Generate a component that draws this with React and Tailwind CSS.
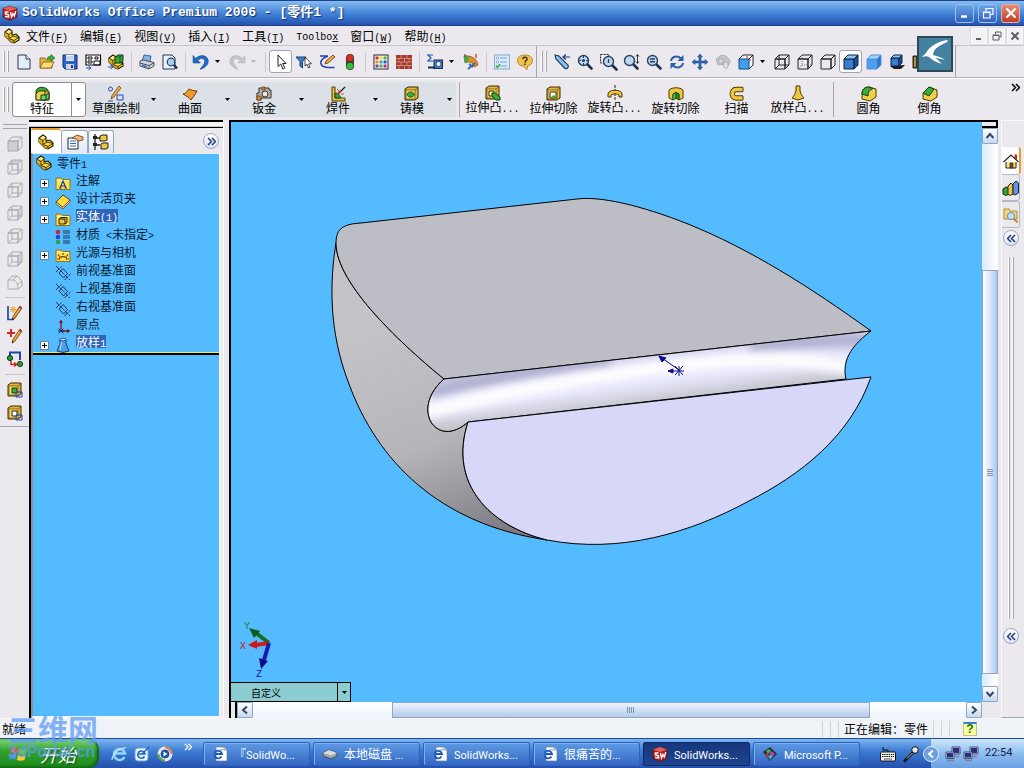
import React from 'react';
import clsx from 'clsx';

/* ---------- icons, all on a 16 x 16 grid ---------- */

const Lens = ({ children }) => (
  <>
    <path d="M10 10 L14.5 14.5" stroke="#1c2f4c" strokeWidth="2.6" strokeLinecap="round" />
    <circle cx="6.5" cy="6.5" r="5" fill="#bcd8f0" stroke="#27415f" strokeWidth="1.4" />
    {children}
  </>
);

const Cube = ({ front = 'none', top = 'none', side = 'none', stroke = '#222', inner }) => (
  <g stroke={stroke} strokeWidth="1" strokeLinejoin="round">
    <path d="M1 5 H11 V15 H1 Z" fill={front} />
    <path d="M1 5 L5 1 H15 L11 5 Z" fill={top} />
    <path d="M11 5 L15 1 V11 L11 15 Z" fill={side} />
    {inner}
  </g>
);

const hidden = <path d="M5 1 V11 H15 M5 11 L1 15" fill="none" />;

const GoldBox = ({ children }) => (
  <>
    <path d="M1 3 L4 1 H14 V12 L11 14 H1 Z" fill="#e3b53a" stroke="#3a2a05" />
    <path d="M2 4 H11 V13 H2 Z" fill="#f7da6a" stroke="#6b4e0c" strokeWidth=".7" />
    <path d="M11 4 L14 1.5" stroke="#6b4e0c" strokeWidth=".7" />
    {children}
  </>
);

const Part = () => (
  <>
    <path d="M1 4 L5 1 L8 3 V7 L12 6 L15 9 V12 L10 15 L7 14 L1 8 Z" fill="#f7d83c" stroke="#201800" strokeWidth="1.1" />
    <path d="M5 10.5 L10 12.5 V15 L7 14 L1 8 V4 L5 6.5 Z" fill="#d9a91e" />
    <path d="M1 4 L5 6.5 V10.5 L10 12.5 V15 M5 6.5 L8 4 M5 10.5 L9 8 L15 9.5 M10 12.5 L15 9.5" fill="none" stroke="#201800" strokeWidth=".8" />
    <path d="M5 2 L7.5 3.5 L5 5.3 L2.2 4 Z" fill="#fff08a" />
  </>
);

const Pencil = () => (
  <>
    <path d="M13 1 L15 3 L8 13 L5 15 L6 11.5 Z" fill="#f2a93a" stroke="#5a3308" strokeWidth=".8" />
    <path d="M13 1 L15 3 L14 4.4 L12 2.6 Z" fill="#c23b2a" />
    <path d="M5 15 L5.5 13 L6.8 14 Z" fill="#111" />
  </>
);

const Folder = ({ children }) => (
  <>
    <path d="M1 3 H6 L7.5 4.5 H15 V14.5 H1 Z" fill="#ffe14a" stroke="#8b7414" />
    <path d="M2 5.5 H14" stroke="#fff6a5" />
    {children}
  </>
);

const Plane = () => (
  <g fill="none" stroke="#1c3560" strokeWidth="1">
    <path d="M4 8 L8 3.500 L12.500 8.500 L8.500 13 Z" />
    <path d="M1 1 L15 15 M1 7 L6.500 1.500 M9.500 15 L15.500 9" strokeDasharray="5 1" />
  </g>
);

const IePage = () => (
  <>
    <path d="M4 1 H12 L15 4 V15 H4 Z" fill="#fff" stroke="#6d7890" strokeWidth=".7" />
    <path d="M12 1 V4 H15" fill="#dbe4f2" stroke="#6d7890" strokeWidth=".7" />
    <path d="M9.500 10.500 A3.800 3.800 0 1 1 10 8 H3" fill="none" stroke="#1d56c0" strokeWidth="1.800" />
    <path d="M1 12 C2 7 7 3 11 4" fill="none" stroke="#3f86dc" strokeWidth=".9" />
  </>
);

const SwLogo = () => (
  <>
    <path d="M1 3.500 L8 1 L15 3.500 V12 L8 15.500 L1 12 Z" fill="#b51f1c" stroke="#5f0d0b" strokeWidth=".7" />
    <path d="M1 3.500 L8 1 L15 3.500 L8 6 Z" fill="#e0605a" />
    <path d="M6.500 7 H3.500 V9 L6.500 9.800 V12 L3 11.500" fill="none" stroke="#fff" strokeWidth="1.500" />
    <path d="M8.500 7 L9.500 12 L11 8.500 L12.300 11 L13.800 6" fill="none" stroke="#fff" strokeWidth="1.300" />
  </>
);

const Monitors = () => (
  <>
    <path d="M7 1 H15 V8 H7 Z" fill="#c9cde0" stroke="#4a4f74" />
    <path d="M8 2 H14 V7 H8 Z" fill="#26307e" />
    <path d="M1 6 H9 V12.500 H1 Z" fill="#c9cde0" stroke="#4a4f74" />
    <path d="M2 7 H8 V11.500 H2 Z" fill="#26307e" />
    <path d="M2 14.500 H9 M10 10.500 H14" stroke="#7d82a0" strokeWidth="1.500" />
  </>
);

const icons = {
  logo: <SwLogo />,
  part: <Part />,
  newDoc: (
    <>
      <path d="M2 1 H10 L14 5 V15 H2 Z" fill="#e3effa" stroke="#26354d" />
      <path d="M10 1 V5 H14" fill="#fff" stroke="#26354d" />
    </>
  ),
  open: (
    <>
      <path d="M1 4 H6 L7 6 H13 V14 H1 Z" fill="#e8b43c" stroke="#7a5510" strokeWidth=".8" />
      <path d="M1 14 L4 8 H15 L12 14 Z" fill="#ffdf73" stroke="#7a5510" strokeWidth=".8" />
      <path d="M8 5 C9 2 11 2 12 2.500 V.5 L16 4 L12 7 V5 C10 5 9 5 8 5 Z" fill="#35b135" stroke="#146014" strokeWidth=".6" />
    </>
  ),
  save: (
    <>
      <path d="M1 1 H15 V15 H3 L1 13 Z" fill="#2d62c8" stroke="#12306e" />
      <path d="M4 1 H12 V7 H4 Z" fill="#eef4fb" />
      <path d="M4 3 H12 M4 5 H12" stroke="#87a9dd" strokeWidth=".8" />
      <path d="M4 10 H12 V15 H4 Z" fill="#cfd6e2" />
      <path d="M9 11 H11 V14 H9 Z" fill="#1b3e8a" />
    </>
  ),
  drawing: (
    <>
      <path d="M1 1 H15.500 V11 H1 Z" fill="#fff" stroke="#111" strokeWidth="1.200" />
      <path d="M3 3 H7 V5 H3 Z M10 3 H13 V5 H10 Z M3 7 H7 V9 H3 Z M9 7 H15 V11 H9 Z" fill="none" stroke="#111" />
      <path d="M1 14 H5 M3.500 12 L6 14 L3.500 16" fill="none" stroke="#1f4fc0" />
    </>
  ),
  assembly: (
    <>
      <Part />
      <path d="M7 3 L10 1 H15 V7 L12 9 H7 Z" fill="#39a83c" stroke="#0c3c10" />
      <path d="M7 3 H12 V9 M12 3 L15 1" fill="none" stroke="#0c3c10" strokeWidth=".7" />
      <path d="M0 13 H4 M2.500 11 L5 13 L2.500 15" fill="none" stroke="#1f4fc0" />
    </>
  ),
  print: (
    <>
      <path d="M5 1 L12 2 L11 8 L3 7 Z" fill="#7db2ea" stroke="#2c4f7d" strokeWidth=".8" />
      <path d="M1 7 L4 6 L15 8.500 V12 L10 15 L1 12 Z" fill="#d3d7dd" stroke="#4a515c" />
      <path d="M1 9 L10 11.500 L15 9 M10 11.500 V15" fill="none" stroke="#4a515c" />
      <path d="M3 11 L8 13" stroke="#2f6fc0" strokeWidth="1.500" />
    </>
  ),
  preview: (
    <>
      <path d="M1 1 H10 L13 4 V15 H1 Z" fill="#eaf2fb" stroke="#26354d" />
      <circle cx="9" cy="8" r="3.800" fill="#a8d0ee" stroke="#234468" strokeWidth="1.200" />
      <path d="M12 11 L15 14.500" stroke="#1c2f4c" strokeWidth="2.400" />
    </>
  ),
  undo: <path d="M0 1.500 V9 H7.500 L5 6.500 C8.500 3 12.500 4.500 11.500 8.500 C10.800 11 9 12 7 15.500 C13 13.500 16.500 9.500 15 5.500 C13.500 1 7 0 2.800 4.400 Z" fill="#1f69c4" stroke="#12468f" strokeWidth=".5" />,
  redo: <path d="M16 1.500 V9 H8.500 L11 6.500 C7.500 3 3.500 4.500 4.500 8.500 C5.200 11 7 12 9 15.500 C3 13.500 -.5 9.500 1 5.500 C2.500 1 9 0 13.200 4.400 Z" fill="#c4c3c8" stroke="#b3b2b8" strokeWidth=".5" />,
  pointer: <path d="M5 1 V12.500 L7.800 10 L9.800 15 L11.800 14 L9.800 9.500 H13 Z" fill="#fff" stroke="#222" />,
  filter: (
    <>
      <path d="M0 3 H10 L6.500 7.500 V14 L4 12 V7.500 Z" fill="#3a80c8" stroke="#143d6e" />
      <path d="M9 3 V12 L11 10.200 L12.500 14 L14 13.300 L12.600 9.800 H15.500 Z" fill="#fff" stroke="#222" strokeWidth=".8" />
    </>
  ),
  sketch: (
    <>
      <path d="M1 2 H9 C3 4 0 8 3 11.500 C5 14 9 13.500 15.500 13.500" fill="none" stroke="#2340b4" strokeWidth="1.500" />
      <path d="M14 1 L16 3 L9 9 L6 10 L7 7 Z" fill="#f2a93a" stroke="#5a3308" strokeWidth=".8" />
    </>
  ),
  traffic: (
    <>
      <rect x="4" y="0" width="8" height="16" rx="4" fill="#3c3c34" />
      <circle cx="8" cy="4" r="3.200" fill="#e02a20" />
      <circle cx="8" cy="12" r="3.200" fill="#2fbf3a" />
    </>
  ),
  palette: (
    <>
      <rect x="1" y="1" width="14" height="14" fill="#fff" stroke="#222" />
      {['#d7322c', '#e9d735', '#43b648', '#f08a2a', '#3ca6a0', '#2b51c9', '#7a36b8', '#4fae36', '#b02e7a'].map((fill, i) => (
        <rect key={fill} x={2.5 + (i % 3) * 4} y={2.5 + Math.floor(i / 3) * 4} width="3" height="3" fill={fill} />
      ))}
    </>
  ),
  brick: (
    <>
      <rect x="0" y="1" width="16" height="14" fill="#a83a2c" />
      <path d="M0 4.500 H16 M0 8 H16 M0 11.500 H16 M5 1 V4.500 M11 1 V4.500 M3 4.500 V8 M8.500 4.500 V8 M13 4.500 V8 M5 8 V11.500 M11 8 V11.500 M3 11.500 V15 M8.500 11.500 V15 M13 11.500 V15" stroke="#d9a894" strokeWidth=".7" />
    </>
  ),
  measure: (
    <>
      <path d="M6 1 H1 L4 4 L1 7 H6" fill="none" stroke="#1f4fa8" strokeWidth="1.200" />
      <rect x="7" y="6" width="8.500" height="8.500" fill="#3f7fd0" stroke="#1c2b44" />
      <circle cx="11.500" cy="10" r="2.600" fill="#eaf0f7" stroke="#1c2b44" strokeWidth=".8" />
      <path d="M1 13.500 H8" stroke="#1c2b44" strokeWidth="2" />
    </>
  ),
  deviation: (
    <>
      <path d="M1 2 C7 1 14 4 15 11 L11 13 C10 8 6 7 2 9 Z" fill="#e98a23" stroke="#5d3a0a" strokeWidth=".6" />
      <path d="M1 2 C4 1.600 5 2 6.500 2.600 L5 7.600 L2 9 Z" fill="#3bb04a" />
      <path d="M13 4 V0 M2 0 V3" stroke="#c22" strokeWidth="1.200" />
      <path d="M6 10 L10 13 M5 15 L12 9" stroke="#2a67b5" strokeWidth="1.800" />
    </>
  ),
  options: (
    <>
      <rect x="0.500" y="1" width="15" height="14" fill="#d8ecfb" stroke="#86acd2" />
      <path d="M6 4 H13 M6 8 H13 M6 12 H13" stroke="#7aa0c8" strokeWidth="1.200" />
      <path d="M2.500 3 H4.500 V5 H2.500 Z M2.500 7 H4.500 V9 H2.500 Z" fill="#fff" stroke="#7aa0c8" strokeWidth=".7" />
      <path d="M2 11.500 L3.500 13.500 L6 10" fill="none" stroke="#3aa544" strokeWidth="1.400" />
    </>
  ),
  help: (
    <>
      <path d="M8 1 C12.500 1 15.500 3 15.500 6.500 C15.500 10 12.500 11.500 10.500 12 L10 15.500 L6.500 12.200 C3 12 .5 10 .5 6.500 C.5 3 3.500 1 8 1 Z" fill="#f3c24c" stroke="#a37414" strokeWidth=".8" />
      <path d="M5.800 5.200 C5.800 2.400 10.300 2.600 10 5.200 C9.800 6.600 8 6.600 8 8.500 M8 9.500 V11" fill="none" stroke="#29241a" strokeWidth="1.400" />
    </>
  ),
  lastView: (
    <>
      <path d="M1 1 L5 2 L14 11 C15.500 13 12.500 16 10.500 14 L2 5 Z" fill="#8fc0ea" stroke="#1b3b63" strokeWidth="1.100" />
      <path d="M16 3 H9 M12 .5 L9 3 L12 5.500" fill="none" stroke="#1b3b8a" strokeWidth="1.200" />
    </>
  ),
  zoomFit: <Lens><circle cx="6.500" cy="6.500" r="1.600" fill="#27415f" /><path d="M6.500 2 V4 M6.500 9 V11 M2 6.500 H4 M9 6.500 H11" stroke="#27415f" /></Lens>,
  zoomArea: (
    <>
      <path d="M.5 .5 H9 V9 H.5 Z" fill="none" stroke="#222" strokeDasharray="2 1" />
      <g transform="translate(2 1)"><Lens><path d="M6.500 4 V8" stroke="#27415f" strokeWidth="1.300" /></Lens></g>
    </>
  ),
  zoomInOut: <Lens><path d="M14.500 1 V9 M13 2.500 L14.500 .5 L16 2.500 M13 7.500 L14.500 9.500 L16 7.500" fill="none" stroke="#222" strokeWidth=".9" /></Lens>,
  zoomSel: <Lens><path d="M4 5 H9 M4 7.800 H9" stroke="#27415f" strokeWidth="1.500" /></Lens>,
  rotate: (
    <g fill="none" stroke="#2a5fa8" strokeWidth="2">
      <path d="M2 7 C2.500 3 8 0.500 12 4.500 M14 9 C13.500 13 8 15.500 4 11.500" />
      <path d="M14.500 1 V7 H8.500 Z M1.500 15 V9 H7.500 Z" fill="#2a5fa8" stroke="none" />
    </g>
  ),
  pan: <path d="M8 0 L10.500 3 H9 V7 H13 V5.500 L16 8 L13 10.500 V9 H9 V13 H10.500 L8 16 L5.500 13 H7 V9 H3 V10.500 L0 8 L3 5.500 V7 H7 V3 H5.500 Z" fill="#2f68b5" stroke="#163a70" strokeWidth=".5" />,
  ghost: (
    <g fill="#c5c4ca" stroke="#a9a8af" strokeWidth=".8">
      <path d="M1 5 L6 1 L11 2 L15 6 L14 11 L9 10 L3 11 Z" />
      <path d="M4 5 H8 V9 H4 Z M9 8 H13 V13 L11 15 L8 12 Z" fill="#dddce1" />
    </g>
  ),
  stdViews: (
    <>
      <path d="M5 1 H15 V11 L11 15" fill="#fff" stroke="#222" />
      <path d="M1 5 H11 V15 H1 Z" fill="#3fa0ee" stroke="#154a86" />
      <path d="M1 5 L5 1 M11 5 L15 1" stroke="#222" />
      <path d="M9 2 V5 M13 6 H11" stroke="#c22" />
    </>
  ),
  wireframe: <Cube inner={hidden} />,
  hiddenGray: <Cube inner={<g strokeDasharray="1 1" stroke="#777">{hidden}</g>} />,
  hiddenNone: <Cube />,
  shadedEdges: <Cube front="#3a7ccf" top="#8fc2f2" side="#1d4f9c" stroke="#0d2344" />,
  shaded: <Cube front="#4f9ff0" top="#a2d0fa" side="#2f74c9" stroke="#4f93dd" />,
  shadow: (
    <>
      <path d="M1 12 L5 15 H12 L16 11 Z" fill="#1a1a1a" />
      <path d="M2 4 H10 V12 H2 Z" fill="#3a7ccf" stroke="#0d2344" />
      <path d="M2 4 L5 1 H13 L10 4 Z" fill="#8fc2f2" stroke="#0d2344" />
      <path d="M10 4 L13 1 V9 L10 12 Z" fill="#1d4f9c" stroke="#0d2344" />
    </>
  ),
  section: (
    <>
      <path d="M1 2 H5 V14 H1 Z" fill="#3a3420" stroke="#222" />
      <path d="M3 3 V13" stroke="#d8b43a" strokeWidth="1.500" />
      <path d="M7 2 H15 V14 H7 Z" fill="#2a68b5" stroke="#111" />
    </>
  ),
  features: (
    <>
      <path d="M2 6 C2 1 9 0 13 3 L15 6 V14 H2 Z" fill="#35a83a" stroke="#103f12" />
      <path d="M2 8 L5 5 H11 V14 H2 Z" fill="#f1cf4a" stroke="#4d3a08" />
      <path d="M11 5 L15 6 V14 H11 Z" fill="#e0b534" stroke="#4d3a08" strokeWidth=".7" />
      <path d="M7 9 H12 V14 H7 Z M12 9 L15 7 V12 L12 14" fill="#6ad36f" stroke="#103f12" />
    </>
  ),
  sketchTab: (
    <>
      <circle cx="2.500" cy="3" r="2" fill="none" stroke="#2a44c4" />
      <path d="M9 9 H15 V14 H9 Z" fill="none" stroke="#2a44c4" />
      <path d="M11 0 L13 2 L6 11 L3 13 L4 9.500 Z" fill="#f2a93a" stroke="#5a3308" strokeWidth=".7" />
      <path d="M0 15 H5" stroke="#2a44c4" />
    </>
  ),
  surface: <path d="M1 8 C4 8 5 5 7 3 C9 4 12 5 15 5 C13 9 11 11 9 14 C7 11 4 10 1 8 Z" fill="#f09a2c" stroke="#6d3d06" />,
  sheetMetal: (
    <>
      <path d="M3 2 H13 V4 H15 V12 H5 V14 H1 V7 H3 Z" fill="#b8b3aa" stroke="#333" />
      <circle cx="9" cy="8" r="3" fill="#e8e5e0" stroke="#333" />
      <path d="M1 10 H5 V14 H1 Z M6 1 H9 V4 H6 Z" fill="#d98c28" stroke="#5e3806" strokeWidth=".7" />
    </>
  ),
  weld: (
    <>
      <path d="M2 1 H5 V12 H15 V15 H2 Z" fill="#eebf3a" stroke="#4d3a08" />
      <path d="M5 12 V7 C8 7 10 9 11 12 Z" fill="#2fa236" stroke="#103f12" strokeWidth=".7" />
      <path d="M8 8 L15 1" stroke="#222" strokeWidth="1.300" />
      <path d="M9 4 V7 H6 M11 8 H14 M10 6 L7 3" stroke="#e04a1c" />
    </>
  ),
  mold: <GoldBox><path d="M3 8.500 C4 5 9 5 10.500 8.500 C9 12 4 12 3 8.500 Z" fill="#37a93c" stroke="#103f12" strokeWidth=".8" /></GoldBox>,
  extrude: <GoldBox><path d="M4 6 H9 V11 H4 Z" fill="#fff2ab" stroke="#3a2a05" /><path d="M7 8 L10 8 L15 12 V15 H11 L7 11 Z" fill="#36ad3c" stroke="#103f12" /></GoldBox>,
  extrudeCut: <GoldBox><path d="M4 6 H10 V12 H4 Z" fill="#fff" stroke="#3a2a05" /><path d="M4.500 11.500 L6.500 9.500 H9.500 V11.500 Z" fill="#36ad3c" /></GoldBox>,
  revolve: (
    <>
      <path d="M8 0 V15" stroke="#222" strokeDasharray="3 1" />
      <path d="M1 9 C1 4 15 4 15 9 V12 H12 V10 C10 8.500 6 8.500 4 10 V12 H1 Z" fill="#f0c63c" stroke="#4d3a08" />
    </>
  ),
  revolveCut: (
    <>
      <path d="M1 4 C4 1 12 1 15 4 V12 L11 14 V8 L8 6.500 L5 8 V14 L1 12 Z" fill="#f0c63c" stroke="#4d3a08" />
      <path d="M5 8 L8 6.500 V12.500 L5 14 Z" fill="#4fc455" stroke="#103f12" strokeWidth=".7" />
      <path d="M11 8 L8 6.500 V12.500 L11 14 Z" fill="#258a2b" stroke="#103f12" strokeWidth=".7" />
    </>
  ),
  sweep: (
    <>
      <path d="M14 3.500 H7 C2 3.500 2 12 7 12 H14" fill="none" stroke="#4d3a08" strokeWidth="5.400" />
      <path d="M14 3.500 H7 C2 3.500 2 12 7 12 H14" fill="none" stroke="#f0c63c" strokeWidth="3.600" />
      <path d="M14 1.500 V5.500 M14 10 V14" stroke="#4d3a08" />
    </>
  ),
  loft: <path d="M6 1 H10 V6 C11 9 12 11 14 13 L8 15 L2 13 C4 11 5 9 6 6 Z" fill="#f0c63c" stroke="#4d3a08" />,
  loftBlue: (
    <>
      <path d="M5 2 H11 V7 L14 14 L8 15.500 L2 14 L5 7 Z" fill="#4b9fe8" stroke="#123f7a" />
      <ellipse cx="8" cy="2.500" rx="3" ry="1.200" fill="#bfe0fb" stroke="#123f7a" strokeWidth=".7" />
      <path d="M6.500 5 L5 13" stroke="#b5dbfa" strokeWidth="1.200" />
    </>
  ),
  fillet: (
    <>
      <path d="M1 8 C1 3 4 1 8 1 L15 3 V11 L9 15 L1 13 Z" fill="#f1cf4a" stroke="#4d3a08" />
      <path d="M1 8 C1 3 4 1 8 1 L12 2.500 C9 4 7 5 7 10 Z" fill="#36ad3c" stroke="#103f12" />
    </>
  ),
  chamfer: (
    <>
      <path d="M1 7 L7 1 L15 4 V11 L9 15 L1 13 Z" fill="#f1cf4a" stroke="#4d3a08" />
      <path d="M1 7 L7 1 L12 3 L7 10 Z" fill="#36ad3c" stroke="#103f12" />
    </>
  ),
  propTab: (
    <>
      <path d="M1 4 H11 V15 H1 Z" fill="#fff" stroke="#222" />
      <path d="M3 7 H9 M3 9.500 H9 M3 12 H9" stroke="#2b65c0" />
      <path d="M5 4 L10 1 L16 3 V6 L11 7 L9 5 Z" fill="#efb277" stroke="#6a3a10" strokeWidth=".8" />
    </>
  ),
  configTab: (
    <>
      <path d="M2 0 V16 M2 4 H7 M2 11 H7" stroke="#222" strokeWidth="1.300" />
      <path d="M0 2 H4 V5 H0 Z M0 9 H4 V12 H0 Z" fill="#222" />
      <path d="M7 2 L9 1 H14 V6 L12 7 H7 Z M8 10 L10 9 H15 V14 L13 15 H8 Z" fill="#f0c63c" stroke="#222" />
    </>
  ),
  annotation: <Folder><path d="M5 13 L8 6 L11 13 M6 11 H10 M4 13 H6.500 M9.500 13 H12" fill="none" stroke="#1d3c9c" strokeWidth="1.200" /></Folder>,
  binder: (
    <>
      <path d="M1 9 L8 2 L15 7 L8 14.500 Z" fill="#ffdb3e" stroke="#5a4508" />
      <path d="M1 9 V11 L8 16 L15 9 V7 L8 14.500 Z" fill="#fff" stroke="#5a4508" strokeWidth=".8" />
    </>
  ),
  solids: <Folder><path d="M4 8 H10 V13 H4 Z M4 8 L6 6.500 H12 V11.500 L10 13" fill="#f3c52f" stroke="#222" /></Folder>,
  lights: <Folder><path d="M4 13 C4 8.500 12 8.500 12 13 M8 8 V6 M4.500 9.500 L3 7.500 M11.500 9.500 L13 7.500 M3 12 H2 M13 12 H14" fill="none" stroke="#7a3a10" strokeWidth="1.200" /></Folder>,
  material: (
    <>
      <circle cx="3" cy="3" r="2.300" fill="#cf2a2a" />
      <circle cx="3" cy="8" r="2.300" fill="#2446c8" />
      <circle cx="3" cy="13" r="2.300" fill="#2ca046" />
      <path d="M8 2 H15 M8 4 H15 M8 7 H15 M8 9 H15 M8 12 H15 M8 14 H15" stroke="#1c3560" strokeWidth="1" />
    </>
  ),
  plane: <Plane />,
  origin: (
    <>
      <path d="M6 12 V2 M6 12 H14" stroke="#7a1220" strokeWidth="1.300" />
      <path d="M4 4 L6 .5 L8 4 Z M12 10 L15.500 12 L12 14 Z" fill="#7a1220" />
      <path d="M3.500 9.500 L8.500 14.500 M8.500 9.500 L3.500 14.500 M3 12 H9" stroke="#1c2f60" />
    </>
  ),
  cubeA: <Cube stroke="#acabb1" front="#cfced4" />,
  cubeB: <Cube stroke="#acabb1" top="#cfced4" inner={hidden} />,
  cubeC: <Cube stroke="#acabb1" inner={hidden} />,
  cubeD: <Cube stroke="#acabb1" side="#cfced4" inner={hidden} />,
  cubeRound: <path d="M1 6 L5 2 H10 L15 7 V12 L11 15 H1 Z M1 6 H6 C9 7 11 9 11 15 M6 6 L10 2 M11 10 L15 7" fill="none" stroke="#acabb1" />,
  newSketch: (
    <>
      <path d="M1 1 V14.500 H6 L9 11" fill="none" stroke="#1f46b4" strokeWidth="1.700" />
      <path d="M6 1 V8 M3 4.500 H9.500 M3.500 2 L8.500 7 M8.500 2 L3.500 7" stroke="#e7a020" />
      <Pencil />
    </>
  ),
  addSketch: (
    <>
      <path d="M4 1 V9 M0 5 H8" stroke="#d42a20" strokeWidth="2" />
      <Pencil />
    </>
  ),
  relations: (
    <>
      <path d="M3 6 V1.500 H13 V9" fill="none" stroke="#1f46b4" strokeWidth="2" />
      <circle cx="3" cy="7" r="2.600" fill="#2a9c34" stroke="#0f3b12" />
      <circle cx="13" cy="13" r="2.600" fill="#2a9c34" stroke="#0f3b12" />
      <path d="M4 10 V13.500 H9 M7 11.500 L9.500 13.500 L7 15.500" fill="none" stroke="#c22" strokeWidth="1.500" />
    </>
  ),
  bossSmall: <GoldBox><path d="M5 6 H10 V11 H5 Z" fill="#36ad3c" stroke="#103f12" /><path d="M9 10 H15 V15 H9 Z" fill="none" stroke="#2340b4" /></GoldBox>,
  cutSmall: <GoldBox><path d="M5 6 H10 V11 H5 Z" fill="#fff" stroke="#222" /><path d="M9 10 H15 V15 H9 Z" fill="none" stroke="#2340b4" /></GoldBox>,
  home: (
    <>
      <path d="M3 8 H13 V15 H3 Z" fill="#ffe77c" stroke="#222" />
      <path d="M11.500 1.500 H14 V7 L11.500 5 Z" fill="#c4291f" />
      <path d="M0.500 9 L8 2 L15.500 9" fill="#fff" stroke="#222" strokeWidth="1.200" />
      <path d="M7 10 H10 V15 H7 Z" fill="#8c4a18" stroke="#222" strokeWidth=".7" />
    </>
  ),
  library: (
    <>
      <path d="M0 9 L3 7 L6 8 V14 L3 15.500 L0 14 Z" fill="#37a43d" stroke="#0e2a10" />
      <path d="M5 6 L8 3 L10 5 V14 L7 15.500 L5 14 Z" fill="#e8c54a" stroke="#3a2a05" />
      <path d="M10 4 L13 1 L15.500 3 V13 L12 15 L10 14 Z" fill="#6a92dc" stroke="#14264d" />
    </>
  ),
  search: (
    <>
      <path d="M1 2 H6 L7 4 H14 V12 H1 Z" fill="#f5d77c" stroke="#b48a2c" />
      <circle cx="8" cy="9" r="3.600" fill="#b9e0f7" stroke="#5b8fb8" />
      <path d="M10.500 11.500 L14.500 15.500" stroke="#c08a2c" strokeWidth="2" />
    </>
  ),
  ie: (
    <>
      <path d="M13.500 11 A5.500 5.500 0 1 1 14 7.500 H4" fill="none" stroke="#8fd3ff" strokeWidth="2.600" />
      <path d="M1 14 C1 8 9 1 15 2" fill="none" stroke="#d5efff" strokeWidth="1.200" />
    </>
  ),
  mail: (
    <>
      <rect x="1" y="2" width="13" height="13" rx="3" fill="#e9f4ff" stroke="#6aa5e0" />
      <path d="M10.500 10.500 A3.600 3.600 0 1 1 11 8 H5" fill="none" stroke="#2165c0" strokeWidth="1.600" />
      <path d="M8 8 L15 1" stroke="#2165c0" strokeWidth="1.500" />
    </>
  ),
  player: (
    <>
      <circle cx="8" cy="8" r="7.500" fill="#e8e4e0" />
      <path d="M8 .5 A7.500 7.500 0 0 1 15.500 8 H8 Z" fill="#e67d2c" />
      <path d="M.5 8 A7.500 7.500 0 0 0 8 15.500 V8 Z" fill="#58a845" />
      <circle cx="8" cy="8" r="5" fill="#1c4ea8" stroke="#fff" />
      <path d="M6.500 5.500 L10.500 8 L6.500 10.500 Z" fill="#fff" />
    </>
  ),
  iePage: <IePage />,
  disk: (
    <>
      <path d="M1 7 L7 4 L15 7 V10 L9 13 L1 10 Z" fill="#9da3ac" stroke="#474c55" />
      <path d="M1 7 L7 4 L15 7 L9 9.500 Z" fill="#d9dde3" />
      <circle cx="11" cy="10.500" r=".8" fill="#4fe04f" />
    </>
  ),
  paint: (
    <>
      <path d="M1 6 L8 1 L15 8 L8 15 Z" fill="#2a2a35" />
      <path d="M4 5 L7 3 L9 5 L6 8 Z" fill="#35c145" />
      <path d="M9 5 L13 8 L11 10 L8 7 Z" fill="#d43adb" />
      <path d="M3 7 L6 8 L8 12 L6 12 Z" fill="#e33a2c" />
      <path d="M8 8 L11 10 L8 14 L7 11 Z" fill="#38b9e8" />
    </>
  ),
  keyboard: (
    <>
      <path d="M8 6 V4 H3 V1" fill="none" stroke="#111" />
      <rect x="0.500" y="6" width="15" height="9" rx="1" fill="#f4f4f4" stroke="#111" />
      <path d="M2 8.500 H14 M2 10.500 H14 M4 13 H12" stroke="#111" strokeDasharray="1.500 .7" />
    </>
  ),
  mic: (
    <>
      <circle cx="12" cy="4" r="3.300" fill="#e9e9e9" stroke="#111" />
      <path d="M10 6.500 L3 13.500 M3 13.500 L1 15.500" stroke="#111" strokeWidth="2.600" />
      <path d="M9.500 7 L4 12.500" stroke="#cfcfcf" strokeWidth="1" />
    </>
  ),
  monitors: <Monitors />,
  flag: (
    <>
      <path d="M1 3 C3 1.500 5 1.800 7.300 3 L6.300 7.500 C4 6.500 2.500 6.500 0 7.500 Z" fill="#ea5a2a" />
      <path d="M8.300 3.400 C10.500 4.400 13 4.300 15.500 3 L14.500 7.500 C12 8.700 9.500 8.700 7.300 7.900 Z" fill="#6cc03c" />
      <path d="M0 8.700 C2.500 7.600 4 7.800 6 8.700 L5 13 C3 12 1 12 -1 13 Z" fill="#4a8fe8" />
      <path d="M7 9 C9.500 10 12 9.800 14.200 8.700 L13 13.200 C11 14.300 8.500 14.400 6 13.400 Z" fill="#f4c92e" />
    </>
  ),
};

const Icon = ({ name, className = 'size-4' }) => (
  <svg viewBox="0 0 16 16" className={clsx('shrink-0 overflow-visible', className)} fill="none" aria-hidden="true">
    {icons[name]}
  </svg>
);

const Caret = ({ gray }) => (
  <svg viewBox="0 0 5 3" className="w-[5px] h-[3px] shrink-0" aria-hidden="true">
    <path d="M0 0 H5 L2.500 3 Z" fill={gray ? '#b9b8be' : '#000'} />
  </svg>
);

const Chevron = ({ dir, className }) => (
  <svg
    viewBox="0 0 8 8"
    className={clsx('size-2', className, {
      'rotate-90': dir === 'down',
      '-rotate-90': dir === 'up',
      'rotate-180': dir === 'left',
    })}
    aria-hidden="true"
  >
    <path d="M2 0.500 L6 4 L2 7.500" fill="none" stroke="currentColor" strokeWidth="2" />
  </svg>
);

const DoubleChevron = ({ left, className = 'size-[9px]' }) => (
  <svg viewBox="0 0 9 9" className={clsx(className, left && 'rotate-180')} aria-hidden="true">
    <path d="M1 1 L4.500 4.500 L1 8 M5 1 L8.500 4.500 L5 8" fill="none" stroke="currentColor" strokeWidth="1.500" />
  </svg>
);

/* ---------- text ---------- */

// half-width characters take six pixels next to twelve pixel Chinese ones
const Label = ({ text, latin = "font-['Liberation_Mono'] text-[10px]" }) =>
  text.split(/([\x20-\x7e]+)/).map((run, i) =>
    i % 2 ? <span key={i} className={clsx('whitespace-pre leading-none', latin)}>{run}</span> : run
  );

/* ---------- chrome ---------- */

const Grip = () => (
  <div className="flex gap-[2px] self-stretch my-[5px] shrink-0">
    <div className="w-[2px] bg-white border-r border-[#a5a4ab]" />
    <div className="w-[2px] bg-white border-r border-[#a5a4ab]" />
  </div>
);

const WindowButton = ({ label, red, children }) => (
  <button
    aria-label={label}
    className={clsx(
      'size-[19px] rounded-[3px] border flex items-center justify-center',
      red
        ? 'border-[#e8b0a5] bg-linear-to-b from-[#e58c78] to-[#c23a1f]'
        : 'border-[#9fc3f0] bg-linear-to-b from-[#6ea5ea] to-[#2f62bd]'
    )}
  >
    <svg viewBox="0 0 12 12" className="size-3" fill="none" stroke="#fff">{children}</svg>
  </button>
);

const TitleBar = () => (
  <header className="h-[26px] shrink-0 flex items-center justify-between pl-[2px] pr-1 border-t border-b border-[#1f3f86] bg-linear-to-b from-[#86bcf2] via-[#3f80d6] via-55% to-[#2653ae]">
    <div className="flex items-center gap-1">
      <Icon name="logo" />
      <h1 className="text-[13px] font-bold text-white whitespace-pre font-['Liberation_Mono','Noto_Sans_CJK_SC',monospace] [text-shadow:1px_1px_1px_#12306e]">
        SolidWorks Office Premium 2006 - [零件1 *]
      </h1>
    </div>
    <div className="flex gap-1">
      <WindowButton label="最小化"><path d="M2 9.500 H8" strokeWidth="2.500" /></WindowButton>
      <WindowButton label="还原">
        <path d="M4 4 V1.500 H11 V7.500 H8.500 M4 1.500 H11" strokeWidth="1.200" />
        <path d="M1.500 5 H8 V11 H1.500 Z M1.500 5.500 H8" strokeWidth="1.200" />
      </WindowButton>
      <WindowButton label="关闭" red><path d="M1.500 1.500 L10.500 10.500 M10.500 1.500 L1.500 10.500" strokeWidth="2.200" /></WindowButton>
    </div>
  </header>
);

const menus = [
  ['文件', 'F'],
  ['编辑', 'E'],
  ['视图', 'V'],
  ['插入', 'I'],
  ['工具', 'T'],
  ['Toolbo', 'x'],
  ['窗口', 'W'],
  ['帮助', 'H'],
];

const MdiButton = ({ label, children }) => (
  <button aria-label={label} className="size-4 border border-[#fafafc] bg-[#f3f2f5] shadow-[0_0_1px_#999] flex items-center justify-center">
    <svg viewBox="0 0 10 10" className="size-[10px]" fill="none" stroke="#5d5c62">{children}</svg>
  </button>
);

const MenuBar = () => (
  <nav className="h-5 shrink-0 flex items-center justify-between pl-1 pr-px border-b border-[#c6c5cb]">
    <div className="flex items-center gap-[6px]">
      <Icon name="part" />
      <ul className="flex items-center gap-3">
        {menus.map(([name, key]) => (
          <li key={name}>
            <button className="leading-4">
              {key === 'x' ? (
                <span className="font-['Liberation_Mono'] text-[10px]">{name}<u>{key}</u></span>
              ) : (
                <>{name}<span className="font-['Liberation_Mono'] text-[10px] leading-none">(<u>{key}</u>)</span></>
              )}
            </button>
          </li>
        ))}
      </ul>
    </div>
    <div className="flex gap-[2px]">
      <MdiButton label="最小化文档"><path d="M2 8 H7" strokeWidth="2" /></MdiButton>
      <MdiButton label="还原文档"><path d="M3.500 3 V1 H9 V6 H7 M1 4 H7 V9 H1 Z M1 4.500 H7" /></MdiButton>
      <MdiButton label="关闭文档"><path d="M1.500 1.500 L8.500 8.500 M8.500 1.500 L1.500 8.500" strokeWidth="2" /></MdiButton>
    </div>
  </nav>
);

const standardTools = [
  ['newDoc', '新建'], ['open', '打开'], ['save', '保存'], ['drawing', '从零件制作工程图'], ['assembly', '从零件制作装配体'], null,
  ['print', '打印'], ['preview', '打印预览'], null,
  ['undo', '撤消', 'caret'], ['redo', '重做', 'gray'], null,
  ['pointer', '选择', 'pressed'], ['filter', '选择过滤器'], ['sketch', '草图'], ['traffic', '重建模型'], null,
  ['palette', '编辑颜色'], ['brick', '编辑纹理'], null,
  ['measure', '测量', 'caret'], ['deviation', '偏差分析'], null,
  ['options', '选项'], ['help', '帮助'],
];

const viewTools = [
  ['lastView', '上一视图'], ['zoomFit', '整屏显示全图'], ['zoomArea', '局部放大'], ['zoomInOut', '放大或缩小'], ['zoomSel', '放大选取范围'],
  ['rotate', '旋转视图'], ['pan', '平移'], ['ghost', '三维工程图视图'], ['stdViews', '标准视图', 'caret'], ['wireframe', '线架图'],
  ['hiddenGray', '隐藏线可见'], ['hiddenNone', '消除隐藏线'], ['shadedEdges', '带边线上色', 'pressed'], ['shaded', '上色'], ['shadow', '上色模式中的阴影'],
  ['section', '剖面视图'],
];

const ToolStrip = ({ tools }) =>
  tools.map((tool, i) => {
    if (!tool) return <div key={i} className="w-2 h-5 flex justify-center"><div className="w-px bg-[#cbcad0]" /></div>;
    const [icon, label, mode] = tool;
    const caret = mode === 'caret' || mode === 'gray';
    return (
      <React.Fragment key={icon}>
        <button
          aria-label={label}
          className={clsx('w-[23px] h-[23px] flex items-center justify-center', mode === 'pressed' && 'bg-white border border-[#a3a2ab] rounded-[3px]')}
        >
          <Icon name={icon} />
        </button>
        {caret && (
          <button aria-label={label + '列表'} className="w-[13px] h-[23px] flex items-center pl-[3px]">
            <Caret gray={mode === 'gray'} />
          </button>
        )}
      </React.Fragment>
    );
  });

const Toolbars = () => (
  <div className="h-8 shrink-0 flex border-b border-[#b4b3ba] relative">
    <div className="flex items-center pl-[3px] gap-[3px] border-r border-[#a5a4ab]">
      <Grip />
      <div className="flex items-center"><ToolStrip tools={standardTools} /></div>
    </div>
    <div className="flex items-center pl-1 gap-[3px] pr-6 border-r border-[#a5a4ab]">
      <Grip />
      <div className="flex items-center"><ToolStrip tools={viewTools} /></div>
    </div>
    <div className="absolute left-[917px] -top-[10px] z-10 size-9 border-2 border-[#2b4a58] bg-[#44809f]">
      <svg viewBox="0 0 32 32" className="size-8" aria-hidden="true">
        <path d="M29 2 C21 3 11 7 7 15 L3 19 C7 18 8 18 10 19 C13 22 17 24 23 26 C20 23 18 21 16 20 C19 20 22 21 26 22 C22 19 17 18 14 17 C15 10 20 8 28 4 Z" fill="#fff" />
      </svg>
    </div>
  </div>
);

const tabs = [
  ['features', '特征'],
  ['sketchTab', '草图绘制'],
  ['surface', '曲面'],
  ['sheetMetal', '钣金'],
  ['weld', '焊件'],
  ['mold', '铸模'],
];

const commands = [
  ['extrude', '拉伸凸...'],
  ['extrudeCut', '拉伸切除'],
  ['revolve', '旋转凸...'],
  ['revolveCut', '旋转切除'],
  ['sweep', '扫描'],
  ['loft', '放样凸...'],
  null,
  ['fillet', '圆角'],
  ['chamfer', '倒角'],
];

const CommandManager = () => (
  <div className="h-[42px] shrink-0 flex items-stretch pl-[3px] pt-[3px] pb-[3px] border-t border-white">
    <Grip />
    <div className="flex ml-[3px] bg-[#dbe1e6]">
      {tabs.map(([icon, label], i) => (
        <div key={icon} className={clsx('w-[74px] flex', i === 0 && 'bg-white border border-[#8f8e96] rounded-[3px]')}>
          <button className="flex-1 flex flex-col items-center justify-center leading-3 whitespace-nowrap">
            <Icon name={icon} />
            {label}
          </button>
          <button
            aria-label={label + '列表'}
            className={clsx('w-[14px] flex items-center justify-center', i === 0 && 'border-l border-[#8f8e96]')}
          >
            <Caret />
          </button>
        </div>
      ))}
    </div>
    <div className="flex items-stretch ml-[3px] border-l border-[#a5a4ab] pl-[2px]">
      {commands.map((c, i) =>
        c ? (
          <button key={c[0]} className="w-[61px] flex flex-col items-center justify-center leading-3 whitespace-nowrap">
            <Icon name={c[0]} />
            <span><Label text={c[1]} /></span>
          </button>
        ) : (
          <div key={i} className="w-[10px] flex justify-center"><div className="w-px bg-[#a5a4ab]" /></div>
        )
      )}
    </div>
    <button aria-label="更多命令" className="ml-auto self-start mr-1 mt-px">
      <DoubleChevron />
    </button>
  </div>
);

const sideTools = [
  'cubeA', 'cubeB', 'cubeC', 'cubeD', 'cubeC', 'cubeD', 'cubeRound', null,
  'newSketch', 'addSketch', 'relations', null,
  'bossSmall', 'cutSmall',
];

const SideToolbar = () => (
  <aside className="w-[29px] shrink-0 flex flex-col">
    <div className="flex flex-col items-center pt-1 pb-[2px] border-b border-[#a5a4ab]">
      <div className="w-6 h-[5px] border-t border-b border-[#a5a4ab] mb-[3px]" />
      {sideTools.map((name, i) =>
        name ? (
          <button key={i} aria-label={'视图工具 ' + (i + 1)} className="h-[23px] w-6 flex items-center justify-center">
            <Icon name={name} />
          </button>
        ) : (
          <div key={i} className="h-2 w-5 flex items-center"><div className="h-px w-full bg-[#c9c5b8]" /></div>
        )
      )}
    </div>
  </aside>
);

const RoundButton = ({ label, left }) => (
  <button
    aria-label={label}
    className="size-4 shrink-0 rounded-full border border-[#9ba6cf] bg-linear-to-b from-white to-[#dbe2f5] text-[#233a7c] flex items-center justify-center"
  >
    <DoubleChevron left={left} />
  </button>
);

const tree = [
  { icon: 'annotation', label: '注解', plus: true },
  { icon: 'binder', label: '设计活页夹', plus: true },
  { icon: 'solids', label: '实体(1)', plus: true, selected: true },
  { icon: 'material', label: '材质 <未指定>' },
  { icon: 'lights', label: '光源与相机', plus: true },
  { icon: 'plane', label: '前视基准面' },
  { icon: 'plane', label: '上视基准面' },
  { icon: 'plane', label: '右视基准面' },
  { icon: 'origin', label: '原点' },
  { icon: 'loftBlue', label: '放样1', plus: true, selected: true },
];

const FeatureTree = () => (
  <section className="w-[194px] shrink-0 flex flex-col border-t-2 border-black">
    <div className="h-[5px] bg-[#f4f3f6] border-b border-[#c6c5cb]" />
    <div className="flex-1 flex flex-col border-t border-l-2 border-black">
      <div className="h-[25px] flex items-end">
        <button aria-label="特征管理器" className="w-[30px] h-[25px] bg-white border-t-2 border-[#e89b2c] rounded-t-[3px] flex items-center justify-center">
          <Icon name="part" />
        </button>
        <button aria-label="属性管理器" className="w-[27px] h-[23px] bg-linear-to-b from-white to-[#dfe8f5] border border-b-0 border-[#9aa7c0] rounded-t-[3px] flex items-center justify-center">
          <Icon name="propTab" />
        </button>
        <button aria-label="配置管理器" className="w-[26px] h-[23px] bg-linear-to-b from-white to-[#dfe8f5] border border-b-0 border-[#9aa7c0] rounded-t-[3px] flex items-center justify-center">
          <Icon name="configTab" />
        </button>
        <div className="ml-auto mr-1 mb-1 flex"><RoundButton label="展开窗格" /></div>
      </div>
      <div className="flex-1 mr-[2px] border-2 border-t border-[#f4f6fa] border-t-[#e8eef6] border-l-[#8790a0] bg-[#55bbff] text-[#0a1a30]">
        <div className="h-[18px] flex items-center gap-[5px] pl-[3px] leading-4">
          <Icon name="part" />
          <span><Label text="零件1" /></span>
        </div>
        <ul>
          {tree.map((node) => (
            <li key={node.label} className="h-[18px] flex items-center pl-[7px]">
              {node.plus ? (
                <button aria-label={'展开 ' + node.label} className="size-[9px] mt-1 bg-white border border-[#6f7f96] flex items-center justify-center">
                  <svg viewBox="0 0 5 5" className="size-[5px]"><path d="M0 2.500 H5 M2.500 0 V5" stroke="#000" /></svg>
                </button>
              ) : (
                <span className="w-[9px]" />
              )}
              <Icon name={node.icon} className="size-4 ml-[6px] mr-[5px] mt-[3px]" />
              <span className={clsx('h-[13px] leading-[13px] mb-1', node.selected && 'bg-[#2f66b8] text-white')}>
                <Label text={node.label} />
              </span>
            </li>
          ))}
        </ul>
        <div className="h-[3px] bg-black border-t border-[#f2ea4c]" />
      </div>
    </div>
  </section>
);

/* ---------- model ---------- */

// edge curves, each one continuing from the end point of the edge before it
const edges = {
  topLeft: 'C405 347 336 285 336 243',
  topCorner: 'C336 228 344 224 361 223',
  topRight: 'C600 196 640 205 688 224 C750 249 810 287 871 331',
  outerLeft: 'C330 280 328 330 349 384 C377 460 438 524 547 540',
  outerBottom: 'C850 437 800 475 749 501 C690 533 620 554 547 540',
  frontLeft: 'C490 526 448 484 468 422',
  grooveRight: 'C855 343 841 358 846 379',
  grooveLeft: 'C452 436 438 433 431 422 C424 409 429 392 444 379',
};

const sideFace = `M336 243 ${edges.outerLeft} ${edges.frontLeft} ${edges.grooveLeft} ${edges.topLeft} Z`;
const topFace = `M444 379 ${edges.topLeft} ${edges.topCorner} L577 199 ${edges.topRight} Z`;
const frontFace = `M468 422 L871 377 ${edges.outerBottom} ${edges.frontLeft} Z`;
const groove = `M444 379 L871 331 ${edges.grooveRight} L468 422 ${edges.grooveLeft} Z`;

const Model = () => (
  <svg viewBox="231 122 751 580" preserveAspectRatio="xMinYMin meet" className="absolute inset-0 size-full" role="img" aria-label="放样实体">
    <defs>
      <linearGradient id="side" gradientUnits="userSpaceOnUse" x1="380" y1="320" x2="470" y2="545">
        <stop offset="0" stopColor="#c4c4c8" />
        <stop offset=".55" stopColor="#b6b6ba" />
        <stop offset="1" stopColor="#7c7c82" />
      </linearGradient>
      <linearGradient id="grooveFill" gradientUnits="userSpaceOnUse" x1="640" y1="356" x2="646" y2="404">
        <stop offset="0" stopColor="#d4d4ee" />
        <stop offset=".25" stopColor="#e6e6fa" />
        <stop offset=".6" stopColor="#e6e6fb" />
        <stop offset="1" stopColor="#c4c4cc" />
      </linearGradient>
      <filter id="soft" filterUnits="userSpaceOnUse" x="400" y="300" width="500" height="160">
        <feGaussianBlur stdDeviation="4" />
      </filter>
      <clipPath id="grooveClip"><path d={groove} /></clipPath>
    </defs>
    <g stroke="#000" strokeWidth="1" strokeLinejoin="round">
      <path d={sideFace} fill="url(#side)" />
      <path d={topFace} fill="#bdbdc6" />
      <path d={groove} fill="url(#grooveFill)" stroke="none" />
      <g clipPath="url(#grooveClip)" fill="none" stroke="none">
        <path d="M430 392 C480 380 540 368 610 360" stroke="#b0b0d0" strokeWidth="14" filter="url(#soft)" />
        <path d="M750 347 C790 342 840 338 880 342" stroke="#b0b0d0" strokeWidth="14" filter="url(#soft)" />
        <path d="M425 412 C520 388 640 368 720 362 S820 364 860 369" stroke="#fff" strokeWidth="13" filter="url(#soft)" />
      </g>
      <path d={groove} fill="none" />
      <path d={frontFace} fill="#d7d7f7" />
    </g>
    <g stroke="#0b0b8c" strokeWidth="1" fill="#0b0b8c">
      <path d="M659 356 L679 370 M668 371 H684 M679 366 V376 M675 366 L683 375 M683 366 L675 375" />
      <path d="M659 356 L666 358 L662 362 Z M668 371 L673 369 V373 Z" />
    </g>
    <g strokeWidth="4">
      <path d="M269 643 L256 633" stroke="#12701e" />
      <path d="M249 628 L260 631 L254 638 Z" fill="#0f5a18" />
      <path d="M269 643 L256 645" stroke="#c81e1e" />
      <path d="M248 645 L257 640 V649 Z" fill="#d01818" />
      <path d="M269 643 L264 660" stroke="#1a1ab0" />
      <path d="M261 669 L259 658 L268 661 Z" fill="#0c0c8a" />
    </g>
    <g className="font-['Liberation_Mono'] text-[10px]">
      <text x="244" y="629" fill="#0a8a2a">Y</text>
      <text x="240" y="649" fill="#d01818">X</text>
      <text x="256" y="677" fill="#1414a8">Z</text>
    </g>
  </svg>
);

const ScrollButton = ({ dir, label }) => (
  <button aria-label={label} className="size-4 shrink-0 border border-[#8ea6c4] rounded-[1px] bg-linear-to-b from-white to-[#c5d9f1] text-[#34465e] flex items-center justify-center">
    <Chevron dir={dir} />
  </button>
);

const Viewport = () => (
  <main className="flex-1 min-w-0 flex flex-col border-t-2 border-l-2 border-black">
    <div className="flex-1 flex">
      <div className="flex-1 relative bg-[#55bbff] flex items-end">
        <Model />
        <div className="relative w-[120px] h-5 border border-l-0 border-black bg-[#8ccdd2] flex">
          <select aria-label="视图方向" className="flex-1 appearance-none pl-5 text-[10px] text-black border-r border-black">
            <option>自定义</option>
          </select>
          <span className="w-3 flex items-center justify-center pointer-events-none"><Caret /></span>
        </div>
      </div>
      <div className="w-4 flex flex-col bg-linear-to-r from-[#dfe9f8] to-white">
        <div className="h-[6px] bg-[#ebe9ed] border-b-2 border-r-2 border-black" />
        <ScrollButton dir="up" label="向上滚动" />
        <div className="basis-0 grow-[126]" />
        <div className="basis-0 grow-[402] flex flex-col items-center justify-center border border-[#8ea6c4] bg-linear-to-r from-white via-[#dbe8f9] to-[#a9c6ec]">
          <div className="w-[6px] h-[7px] bg-[repeating-linear-gradient(#7f93ad_0_1px,transparent_1px_2px)]" />
        </div>
        <div className="basis-0 grow-[12]" />
        <ScrollButton dir="down" label="向下滚动" />
      </div>
    </div>
    <div className="h-4 flex">
      <div className="w-[6px] bg-[#ebe9ed] border-r-2 border-black" />
      <ScrollButton dir="left" label="向左滚动" />
      <div className="flex-1 flex bg-linear-to-b from-white to-[#eef4fc]">
        <div className="basis-0 grow-[139]" />
        <div className="basis-0 grow-[478] flex items-center justify-center border border-[#8ea6c4] bg-linear-to-b from-[#edf4fd] to-[#b4cbea]">
          <div className="w-[7px] h-[6px] bg-[repeating-linear-gradient(90deg,#7f93ad_0_1px,transparent_1px_2px)]" />
        </div>
        <div className="basis-0 grow-[96]" />
      </div>
      <ScrollButton dir="right" label="向右滚动" />
      <div className="w-4" />
    </div>
  </main>
);

const TaskPane = () => (
  <aside className="w-[26px] shrink-0 pl-[3px] flex flex-col">
    <div className="flex-1 flex flex-col items-center border-t border-b border-l border-[#f8f8fa] border-b-[#a5a4ab] pt-[26px]">
      <button aria-label="SolidWorks 资源" className="w-[19px] h-[27px] self-start bg-white border-r-2 border-[#e89b2c] rounded-r-[3px] flex items-center justify-center">
        <Icon name="home" />
      </button>
      <button aria-label="设计库" className="w-[18px] h-[27px] self-start border border-l-0 border-[#b4bac8] rounded-r-[3px] flex items-center justify-center">
        <Icon name="library" />
      </button>
      <button aria-label="文件探索器" className="w-[18px] h-[27px] self-start border border-l-0 border-[#b4bac8] rounded-r-[3px] flex items-center justify-center">
        <Icon name="search" />
      </button>
      <div className="my-[2px] mr-1 flex"><RoundButton label="展开任务窗格" left /></div>
      <div className="flex-1 flex py-1 mr-1"><Grip /></div>
      <div className="mr-1 flex"><RoundButton label="折叠任务窗格" left /></div>
      <div className="h-[73px]" />
    </div>
  </aside>
);

const StatusSeps = () => (
  <div className="flex gap-[7px] h-4">
    <div className="w-px bg-[#cdd0d6]" />
    <div className="w-px bg-[#cdd0d6]" />
    <div className="w-px bg-[#cdd0d6]" />
  </div>
);

const StatusBar = () => (
  <footer className="h-5 shrink-0 flex items-center pl-[2px] pr-[47px] bg-[#eff2f7] border-t border-[#f8f9fb]">
    <span>就绪</span>
    <div className="ml-auto flex items-center gap-[5px]">
      <StatusSeps />
      <span>正在编辑：零件</span>
      <StatusSeps />
      <button aria-label="快速提示" className="ml-2 w-[14px] h-[14px] bg-[#fbfba0] border border-[#b8c488] border-t-2 border-t-[#3f7fd0] text-[12px] leading-[11px] font-bold text-[#0c7a1a] font-['Liberation_Sans']">
        ?
      </button>
    </div>
  </footer>
);

const windows = [
  ['iePage', '『SolidWo...'],
  ['disk', '本地磁盘 ...'],
  ['iePage', 'SolidWorks...'],
  ['iePage', '很痛苦的...'],
  ['logo', 'SolidWorks...', true],
  ['paint', 'Microsoft P...'],
];

const Taskbar = () => (
  <footer className="h-[30px] shrink-0 flex items-stretch relative text-white border-t border-[#1d4a9c] bg-linear-to-b from-[#7fb6f0] via-[#3f7dd4] via-40% to-[#2450ac]">
    <button className="w-[99px] shrink-0 rounded-r-[10px] pl-[10px] flex items-center gap-3 bg-linear-to-b from-[#7fd673] via-[#2fa32b] via-40% to-[#1c8a1c] shadow-[inset_-2px_-1px_3px_#0d5c10] text-[18px] leading-6 italic [text-shadow:1px_1px_2px_#0d4010]">
      <Icon name="flag" className="size-[18px]" />
      开始
    </button>
    <div className="flex items-center gap-[7px] pl-3">
      <button aria-label="Internet Explorer"><Icon name="ie" /></button>
      <button aria-label="Outlook Express"><Icon name="mail" /></button>
      <button aria-label="Windows Media Player"><Icon name="player" /></button>
      <button aria-label="更多" className="self-start mt-1 ml-1"><DoubleChevron className="size-2" /></button>
    </div>
    <div className="flex-1 min-w-0 flex items-center gap-[3px] pl-[11px]">
      {windows.map(([icon, label, active], i) => (
        <button
          key={i}
          className={clsx(
            'w-[107px] h-6 rounded-[2px] border pl-[8px] flex items-center gap-[6px] whitespace-nowrap overflow-hidden',
            active
              ? 'border-[#0f2a62] bg-linear-to-b from-[#16377c] to-[#1f4590]'
              : 'border-[#2f62ba] bg-linear-to-b from-[#5e9ae4] to-[#3468c4] shadow-[inset_1px_1px_0_#7fb0ee]'
          )}
        >
          <Icon name={icon} />
          <span><Label text={label} latin="font-[Roboto] text-[11px]" /></span>
        </button>
      ))}
    </div>
    <div className="flex items-center gap-[7px] pr-3">
      <button aria-label="键盘"><Icon name="keyboard" /></button>
      <button aria-label="麦克风"><Icon name="mic" /></button>
    </div>
    <div className="w-[93px] shrink-0 flex items-center gap-[2px] bg-linear-to-b from-[#cfe6fb] via-[#8dbdf0] to-[#6a9fe2]">
      <button aria-label="显示隐藏的图标" className="size-4 -ml-2 mr-1 rounded-full border border-[#dcecfb] bg-[#6c9fdf] flex items-center justify-center">
        <Chevron dir="left" />
      </button>
      <Icon name="monitors" />
      <Icon name="monitors" />
      <time className="ml-1 text-[11px] font-[Roboto] text-[#0f2448]">22:54</time>
    </div>
    <div className="absolute left-2 -top-[25px] pointer-events-none text-[#5f9cf5]/75 font-bold">
      <div className="text-[30px] leading-[28px]">三维网</div>
      <div className="text-[16px] leading-5 font-['Liberation_Sans']">3dPortal.cn</div>
    </div>
  </footer>
);

const App = () => (
  <div className="h-screen flex flex-col overflow-hidden bg-[#ebe9ed] text-[12px] text-black font-['Noto_Sans_CJK_SC',sans-serif]">
    <TitleBar />
    <MenuBar />
    <Toolbars />
    <CommandManager />
    <div className="flex-1 min-h-0 flex">
      <SideToolbar />
      <FeatureTree />
      <div className="w-[6px] shrink-0 border-l border-white bg-[#ebe9ed]" />
      <Viewport />
      <TaskPane />
    </div>
    <StatusBar />
    <Taskbar />
  </div>
);

export default App;
